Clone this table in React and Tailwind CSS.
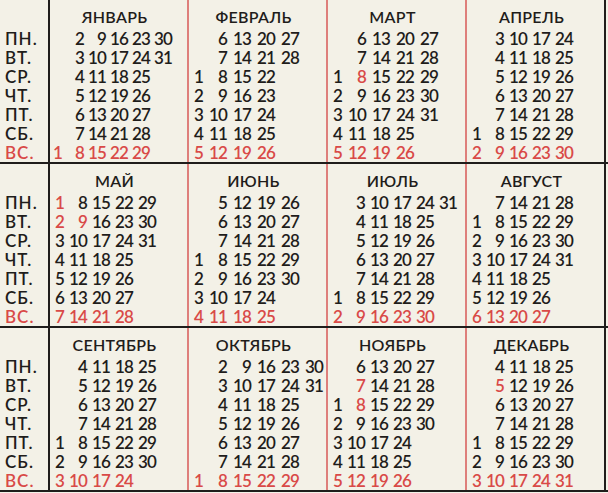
import React from "react";

const MONTHS = ["ЯНВАРЬ","ФЕВРАЛЬ","МАРТ","АПРЕЛЬ","МАЙ","ИЮНЬ","ИЮЛЬ","АВГУСТ","СЕНТЯБРЬ","ОКТЯБРЬ","НОЯБРЬ","ДЕКАБРЬ"];
const DAYS = ["ПН.","ВТ.","СР.","ЧТ.","ПТ.","СБ.","ВС."];
const HOLIDAYS = { 0: [1], 2: [8], 4: [1, 2, 9], 10: [7, 8], 11: [5] };

const GRID = {
  22: "grid-cols-[12px_repeat(5,22px)]",
  23: "grid-cols-[14px_repeat(5,23px)]",
  24: "grid-cols-[14px_repeat(5,24px)]",
};
const STEP = [22, 24, 24, 23, 23, 24, 23, 23, 23, 24, 23, 23];

function monthRows(m) {
  const rows = Array.from({ length: 7 }, () => Array(6).fill(null));
  const first = new Date(1978, m, 1).getDay();
  const offset = (first + 6) % 7;
  const n = new Date(1978, m + 1, 0).getDate();
  for (let d = 1; d <= n; d++) {
    const wd = (d - 1 + offset) % 7;
    const col = Math.floor((d - 1 + offset) / 7);
    rows[wd][col] = d;
  }
  return rows;
}

function Month({ m, last }) {
  const rows = monthRows(m);
  const hol = HOLIDAYS[m] || [];
  return (
    <div
      className={
        "w-[139px] h-full shrink-0 border-r-2 " +
        (last ? "border-[#1f1d1b]" : "border-[#de7f7b]")
      }
    >
      <div className="h-[29px] pt-[4px] pr-[8px] text-center leading-[25px] text-[16px] font-semibold tracking-[0.3px] text-[#1f1d1b]">
        {MONTHS[m]}
      </div>
      {rows.map((row, wd) => (
        <div key={wd} className={"grid h-[19px] leading-[19px] tracking-[-0.8px] " + GRID[STEP[m]]}>
          {row.map((d, c) => (
            <span
              key={c}
              className={
                "text-right " +
                (d !== null && (wd === 6 || hol.includes(d))
                  ? "text-[#d94a47]"
                  : "text-[#1f1d1b]")
              }
            >
              {d ?? ""}
            </span>
          ))}
        </div>
      ))}
    </div>
  );
}

function Band({ start }) {
  return (
    <div className="flex h-[164px] border-b-2 border-[#1f1d1b]">
      <div className="w-[50px] shrink-0 border-r-2 border-[#1f1d1b] pl-[5px]">
        <div className="h-[29px]" />
        {DAYS.map((d, i) => (
          <div
            key={d}
            className={
              "h-[19px] leading-[19px] tracking-[1px] " +
              (i === 6 ? "text-[#d94a47]" : "text-[#1f1d1b]")
            }
          >
            {d}
          </div>
        ))}
      </div>
      {[0, 1, 2, 3].map((k) => (
        <Month key={k} m={start + k} last={k === 3} />
      ))}
    </div>
  );
}

export default function App() {
  return (
    <div
      className="w-[608px] h-[493px] overflow-hidden bg-[#f3f1e7] text-[17px] font-semibold"
      style={{ fontFamily: "Lato, 'Noto Sans', sans-serif" }}
    >
      <Band start={0} />
      <Band start={4} />
      <Band start={8} />
    </div>
  );
}
